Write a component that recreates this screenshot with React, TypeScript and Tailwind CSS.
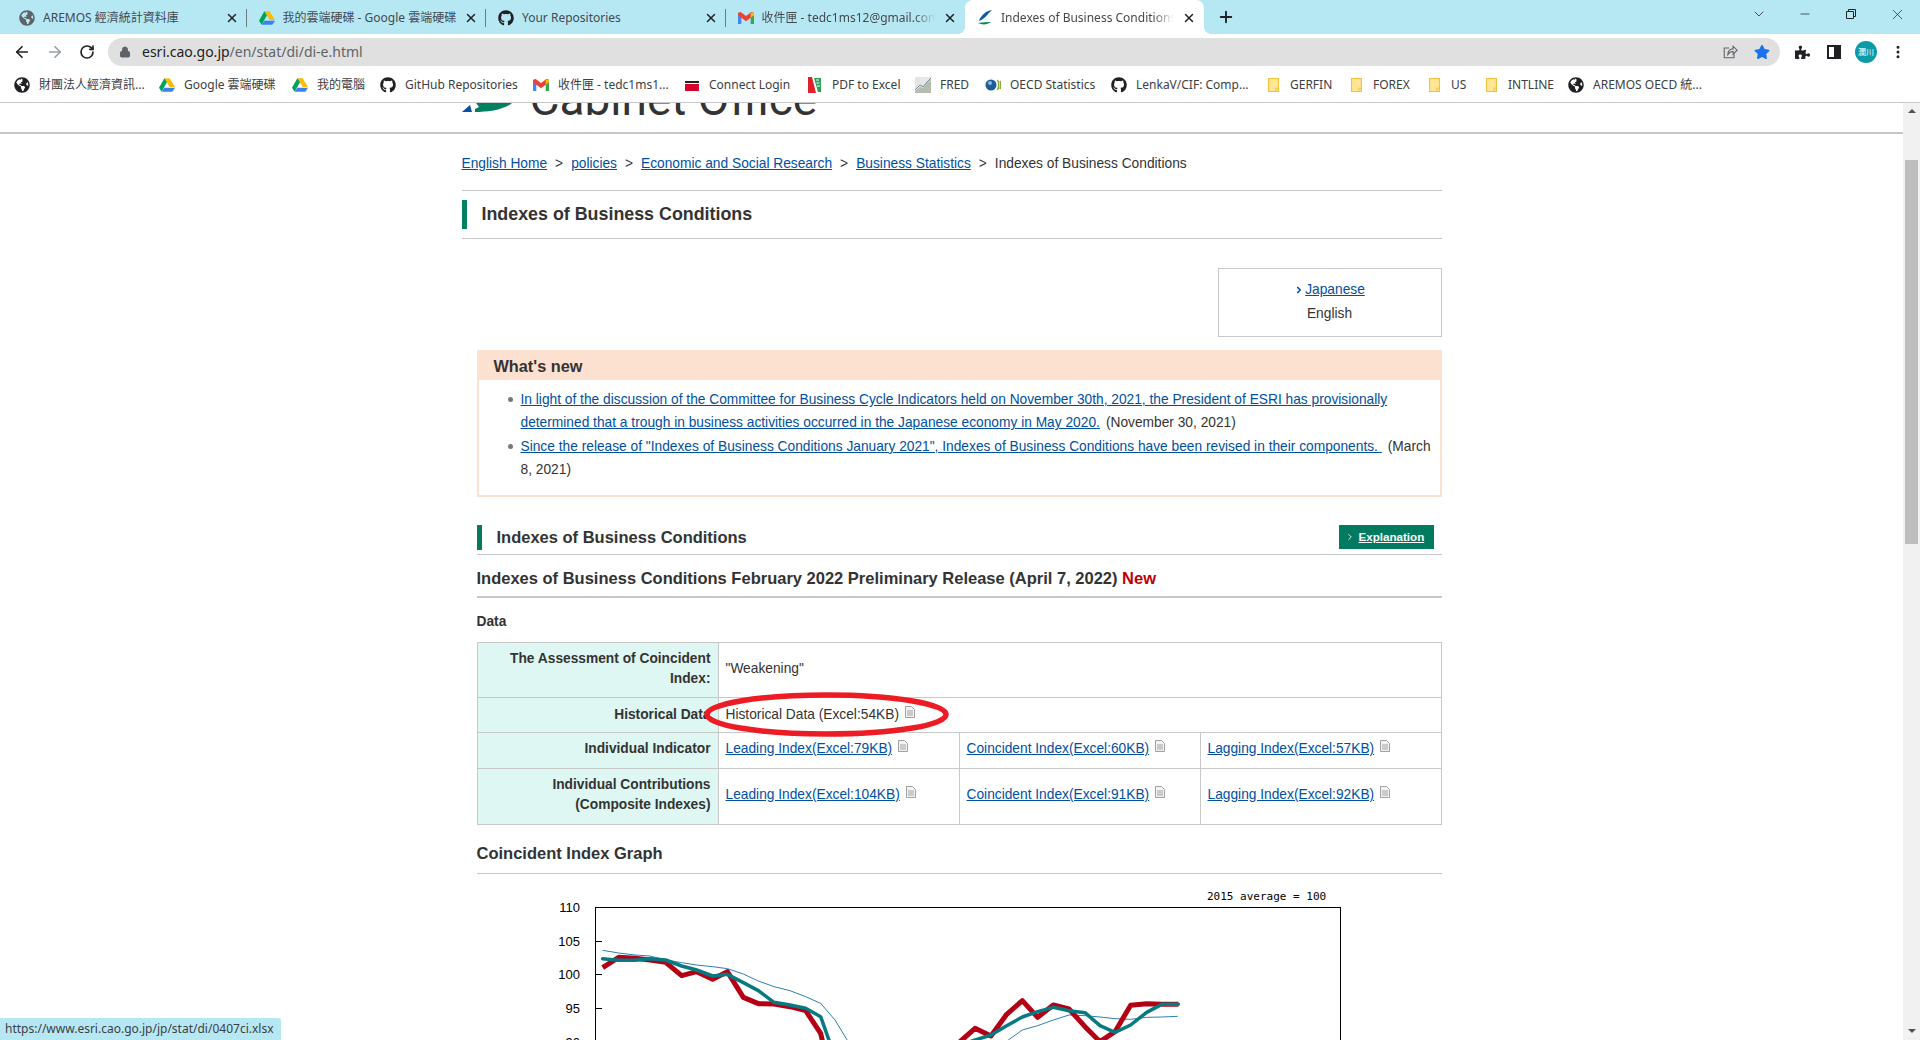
import React from 'react';
import { FaGithub, FaGlobeAmericas, FaStar, FaPuzzlePiece } from 'react-icons/fa';
import { ArrowLeft, ArrowRight, RotateCw, Lock, X, Plus, ChevronDown, Minus, EllipsisVertical, ChevronRight } from 'lucide-react';

const uiFont = "font-['Noto_Sans','Noto_Sans_CJK_TC',sans-serif]";

const DriveIcon = () => (
  <svg viewBox="0 0 24 22" className="w-4 h-4 shrink-0">
    <path d="M8 1h8l8 13h-8z" fill="#fbbc04" />
    <path d="M8 1 0 15l4 6 8-14z" fill="#00a35c" />
    <path d="M8 15h16l-4 6H4z" fill="#3a7ff0" />
  </svg>
);

const GmailIcon = () => (
  <svg viewBox="0 0 24 18" className="w-4 h-4 shrink-0">
    <path d="M0 3v15h5V7z" fill="#4285f4" />
    <path d="M24 3v15h-5V7z" fill="#34a853" />
    <path d="M0 1v4l12 9 12-9V1l-4-1-8 6-8-6z" fill="#ea4335" />
    <path d="M19 1.5 24 1v4l-5 3.500z" fill="#fbbc04" />
  </svg>
);

const EsriIcon = () => (
  <svg viewBox="0 0 16 16" className="w-4 h-4 shrink-0">
    <path d="M15 0C9 1 4 5 2 11c3-1 7-4 9-7z" fill="#0d5aa7" />
    <path d="M1 13c4 2 9 2 13-1-4 0-9 0-13 1z" fill="#0a8a5f" />
  </svg>
);

const ConnectIcon = () => (
  <svg viewBox="0 0 16 16" className="w-4 h-4 shrink-0">
    <rect x="1" y="4" width="14" height="2" fill="#222" />
    <rect x="1" y="7" width="14" height="7" fill="#d6002a" />
  </svg>
);

const PdfIcon = () => (
  <svg viewBox="0 0 16 16" className="w-4 h-4 shrink-0">
    <rect x="1" y="0" width="14" height="16" fill="#e0202a" />
    <path d="M5 0h10v16H9z" fill="#fff" />
    <path d="M7 1h7v14h-3z" fill="#2aa05a" />
    <path d="M9 3h3M9.500 6h3M10 9h3" stroke="#fff" strokeWidth="1" />
  </svg>
);

const FredIcon = () => (
  <svg viewBox="0 0 16 16" className="w-4 h-4 shrink-0">
    <rect width="16" height="16" fill="#e6e6e6" />
    <path d="M0 14 5 10l3 1 4-5 4-4v14H0z" fill="#b5bdb0" />
    <path d="M0 13 5 8l3 2 4-5 4-4" stroke="#6f8f9f" strokeWidth="1" fill="none" />
  </svg>
);

const OecdIcon = () => (
  <svg viewBox="0 0 16 16" className="w-4 h-4 shrink-0">
    <circle cx="6" cy="8" r="5.500" fill="#1d5c9c" />
    <circle cx="5" cy="6" r="2" fill="#8db8dc" />
    <path d="M12.500 3c1.500 3 1.500 7 0 10M15 4c1 2.500 1 5.500 0 8" stroke="#8aa83c" strokeWidth="1.500" fill="none" />
  </svg>
);

const FolderIcon = () => (
  <svg viewBox="0 0 14 18" className="w-[11px] h-4 shrink-0 mx-[2.500px]">
    <path d="M.7.700h12.600v16.600H.7z" fill="#ffe594" stroke="#f0c33c" strokeWidth="1.400" />
    <path d="M10 17v-4h3" fill="none" stroke="#f0c33c" strokeWidth="1.200" />
  </svg>
);

const ShareIcon = () => (
  <svg viewBox="0 0 18 18" className="ml-auto w-[16px] h-[16px]" fill="none" stroke="#5f6368" strokeWidth="1.200">
    <path d="M8 4.500H2.500v11h11V11" />
    <path d="M6.500 12c0-4 2.500-6.500 6-6.500V2.500L17 7l-4.500 4.500V8.500c-2.500 0-4.500 1-6 3.500z" />
  </svg>
);

const bookmarks = [
  { icon: <FaGlobeAmericas className="w-4 h-4 shrink-0 text-[#202124]" />, label: '財團法人經濟資訊...', w: 'w-[104px]' },
  { icon: <DriveIcon />, label: 'Google 雲端硬碟', w: 'w-[92px]' },
  { icon: <DriveIcon />, label: '我的電腦', w: 'w-[47px]' },
  { icon: <FaGithub className="w-4 h-4 shrink-0 text-[#202124]" />, label: 'GitHub Repositories', w: 'w-[112px]' },
  { icon: <GmailIcon />, label: '收件匣 - tedc1ms1...', w: 'w-[110px]' },
  { icon: <ConnectIcon />, label: 'Connect Login', w: 'w-[82px]' },
  { icon: <PdfIcon />, label: 'PDF to Excel', w: 'w-[67px]' },
  { icon: <FredIcon />, label: 'FRED', w: 'w-[29px]' },
  { icon: <OecdIcon />, label: 'OECD Statistics', w: 'w-[85px]' },
  { icon: <FaGithub className="w-4 h-4 shrink-0 text-[#202124]" />, label: 'LenkaV/CIF: Comp...', w: 'w-[113px]' },
  { icon: <FolderIcon />, label: 'GERFIN', w: 'w-[42px]' },
  { icon: <FolderIcon />, label: 'FOREX', w: 'w-[37px]' },
  { icon: <FolderIcon />, label: 'US', w: 'w-[16px]' },
  { icon: <FolderIcon />, label: 'INTLINE', w: 'w-[44px]' },
  { icon: <FaGlobeAmericas className="w-4 h-4 shrink-0 text-[#202124]" />, label: 'AREMOS OECD 統...', w: 'w-[111px]' },
];

const tabs = [
  { icon: <FaGlobeAmericas className="w-4 h-4 shrink-0 text-[#5f6368]" />, label: 'AREMOS 經濟統計資料庫', fade: '' },
  { icon: <DriveIcon />, label: '我的雲端硬碟 - Google 雲端硬碟', fade: '' },
  { icon: <FaGithub className="w-4 h-4 shrink-0 text-[#202124]" />, label: 'Your Repositories', fade: '' },
  { icon: <GmailIcon />, label: '收件匣 - tedc1ms12@gmail.com', fade: '[mask-image:linear-gradient(to_right,black_88%,transparent)]' },
];

const FileIcon = () => (
  <svg viewBox="0 0 10 12" className="inline-block w-[10px] h-[12px] ml-[6px] align-[1px]">
    <path d="M.5.500h6l3 3v8h-9z" fill="#f4f4f4" stroke="#a0a0a0" />
    <path d="M2 5h6M2 7h6M2 9h6" stroke="#a0a0a0" strokeWidth="1" />
  </svg>
);

const TableLink = ({ children }: { children: React.ReactNode }) => (
  <>
    <a className="text-[#00509f] underline">{children}</a>
    <FileIcon />
  </>
);

const toPage = (points: number[][], ox: number) =>
  points.map(([x, y]) => `${ox + x / 3},${880 + y / 3}`).join(' ');

const redLine =
  toPage([[248, 263], [296, 232], [345, 235], [390, 240], [437, 247], [485, 287], [530, 275], [578, 298], [622, 275], [670, 352], [715, 371], [762, 372], [810, 380], [857, 392], [902, 460], [925, 560]], 520) +
  ' ' +
  toPage([[85, 560], [120, 485], [165, 445], [213, 468], [260, 403], [307, 362], [353, 412], [400, 375], [447, 387], [495, 440], [540, 485], [585, 455], [632, 376], [680, 371], [725, 373], [775, 373]], 920);

const tealLine =
  toPage([[248, 236], [296, 241], [345, 241], [390, 236], [437, 240], [485, 258], [530, 270], [578, 288], [622, 283], [670, 308], [715, 332], [762, 367], [810, 375], [857, 385], [902, 410], [955, 560]], 520) +
  ' ' +
  toPage([[100, 560], [150, 485], [213, 465], [260, 437], [307, 411], [353, 395], [400, 382], [447, 392], [495, 398], [540, 437], [585, 457], [632, 435], [680, 397], [725, 373], [775, 373]], 920);

const thinLine =
  toPage([[248, 211], [296, 219], [345, 225], [390, 228], [437, 240], [485, 248], [530, 255], [578, 260], [622, 266], [670, 282], [715, 303], [762, 320], [810, 332], [857, 350], [902, 370], [945, 420], [1030, 560]], 520) +
  ' ' +
  toPage([[190, 540], [265, 480], [307, 450], [353, 437], [400, 420], [447, 405], [495, 407], [540, 411], [585, 416], [632, 418], [680, 412], [725, 411], [773, 409]], 920);

const CoincidentChart = () => (
  <svg viewBox="477 874 965 170" className="block w-[965px] h-[170px] ml-[15px]">
    <text x="1207" y="900" fontFamily="DejaVu Sans Mono, monospace" fontSize="11" fill="#000">2015 average = 100</text>
    <rect x="595.500" y="907.500" width="745" height="200" fill="none" stroke="#000" strokeWidth="1" />
    {[941, 974, 1008].map(y => (
      <path key={y} d={`M596 ${y}.5h6`} stroke="#000" strokeWidth="1" />
    ))}
    {[['110', 907], ['105', 941], ['100', 974], ['95', 1008], ['90', 1042]].map(([t, y]) => (
      <text key={t} x="580" y={Number(y) + 5} textAnchor="end" fontFamily="Liberation Sans, sans-serif" fontSize="13" fill="#000">{t}</text>
    ))}
    <polyline points={thinLine} fill="none" stroke="#2e7fb0" strokeWidth="1" />
    <polyline points={redLine} fill="none" stroke="#b40014" strokeWidth="5" strokeLinejoin="round" />
    <polyline points={tealLine} fill="none" stroke="#067a80" strokeWidth="3.500" strokeLinejoin="round" strokeLinecap="round" />
  </svg>
);

const App = () => {
  return (
    <div className="relative h-[1040px] w-[1920px] overflow-hidden bg-white flex flex-col">
      {/* Tab strip */}
      <div className={`h-[34px] shrink-0 bg-[#b6e8f4] flex pl-[7px] ${uiFont}`}>
        {tabs.map((tab, i) => (
          <div key={tab.label} className="relative w-[239.5px] flex items-center pl-[12px] pr-[8px] pt-[2px] text-[12px] text-[#45494d]">
            {tab.icon}
            <span className={`ml-[8px] flex-1 overflow-hidden whitespace-nowrap ${tab.fade}`}>{tab.label}</span>
            <X className="w-[14px] h-[14px] ml-[8px] shrink-0 text-[#202124]" strokeWidth={2.5} />
            {i < 3 && <div className="absolute right-0 top-[9px] h-[18px] w-px bg-[#6b7b80]" />}
          </div>
        ))}
        <div className="relative w-[239px] flex items-center pl-[12px] pr-[8px] pt-[2px] text-[12px] text-[#45494d] bg-white rounded-t-lg">
          <div className="absolute -left-2 bottom-0 w-2 h-2 bg-[radial-gradient(circle_at_0_0,transparent_8px,white_8px)]" />
          <div className="absolute -right-2 bottom-0 w-2 h-2 bg-[radial-gradient(circle_at_100%_0,transparent_8px,white_8px)]" />
          <EsriIcon />
          <span className="ml-[8px] flex-1 overflow-hidden whitespace-nowrap [mask-image:linear-gradient(to_right,black_88%,transparent)]">Indexes of Business Conditions</span>
          <X className="w-[14px] h-[14px] ml-[8px] shrink-0 text-[#202124]" strokeWidth={2.5} />
        </div>
        <div className="w-[44px] flex items-center justify-center">
          <Plus className="w-[18px] h-[18px] text-[#202124]" strokeWidth={2.5} />
        </div>
        <div className="ml-auto flex h-[28px] items-center">
          <div className="w-[46px] flex justify-center"><ChevronDown className="w-[16px] h-[16px] text-[#333]" strokeWidth={1.25} /></div>
          <div className="w-[46px] flex justify-center"><Minus className="w-[14px] h-[14px] text-[#222]" strokeWidth={1.25} /></div>
          <div className="w-[46px] flex justify-center">
            <svg viewBox="0 0 10 10" className="w-[10px] h-[10px]" fill="none" stroke="#222" strokeWidth="1">
              <path d="M.5 2.500h7v7h-7zM2.500 2.500v-2h7v7h-2" />
            </svg>
          </div>
          <div className="w-[46px] flex justify-center"><X className="w-[17px] h-[17px] text-[#222]" strokeWidth={1} /></div>
        </div>
      </div>

      {/* Toolbar */}
      <div className="h-[32px] shrink-0 flex items-end pl-[5px]">
        <div className="h-[28px] w-[33px] flex items-center justify-center"><ArrowLeft className="w-[18px] h-[18px] text-[#202124]" strokeWidth={2.25} /></div>
        <div className="h-[28px] w-[33px] flex items-center justify-center"><ArrowRight className="w-[18px] h-[18px] text-[#9aa0a6]" strokeWidth={2.25} /></div>
        <div className="h-[28px] w-[32px] flex items-center justify-center"><RotateCw className="w-[16px] h-[16px] text-[#202124]" strokeWidth={2.5} /></div>
        <div className={`ml-[5px] h-[28px] w-[1672px] rounded-full bg-[#e0e0e0] flex items-center pl-[11px] pr-[10px] ${uiFont}`}>
          <Lock className="w-[12px] h-[12px] text-[#5f6368] fill-[#5f6368]" strokeWidth={2} />
          <span className="ml-[11px] pb-[2px] text-[14px] text-[#202124]">esri.cao.go.jp<span className="text-[#5f6368]">/en/stat/di/di-e.html</span></span>
          <ShareIcon />
          <FaStar className="ml-[16px] w-[16px] h-[16px] text-[#1a73e8]" />
        </div>
        <div className="ml-[6px] flex h-[28px] items-center">
          <div className="w-[32px] flex justify-center"><FaPuzzlePiece className="w-[15px] h-[15px] text-[#202124]" /></div>
          <div className="w-[32px] flex justify-center">
            <div className="w-[14px] h-[14px] border-2 border-[#202124] flex justify-end"><div className="w-[5px] bg-[#202124]" /></div>
          </div>
          <div className="w-[32px] flex justify-center">
            <div className="w-[22px] h-[22px] rounded-full bg-[#0d9aa8] text-white text-[8px] flex items-center justify-center font-['Noto_Sans_CJK_TC',sans-serif]">瀾川</div>
          </div>
          <div className="w-[32px] flex justify-center"><EllipsisVertical className="w-[16px] h-[16px] text-[#202124]" strokeWidth={2.5} /></div>
        </div>
      </div>

      {/* Bookmarks bar */}
      <div className={`h-[37px] shrink-0 flex items-center gap-[16px] pl-[14px] pt-[1px] border-b border-[#c9c9c9] text-[12px] text-[#3c4043] ${uiFont}`}>
        {bookmarks.map(b => (
          <div key={b.label} className="flex items-center gap-[9px]">
            {b.icon}
            <span className={`${b.w} whitespace-nowrap`}>{b.label}</span>
          </div>
        ))}
      </div>

      <div className="flex-1 min-h-0 flex">
        {/* Page */}
        <div className="flex-1 min-w-0 overflow-hidden font-['Liberation_Sans',Arial,sans-serif] text-[13.75px] text-[#333]">
          <div className="h-[31px] border-b-2 border-[#c8c8c8] overflow-hidden">
            <div className="w-[980px] mx-auto relative h-[29px]">
              <svg viewBox="0 0 50 10" className="absolute left-0 top-0 w-[50px] h-[10px]">
                <path d="M0 9 8 2 10 9z" fill="#0d4ea2" />
                <path d="M13 9C25 9 42 7 50 0H14l3 4-4 2z" fill="#00805f" />
              </svg>
              <span className="absolute left-[68px] -top-[27px] font-['Roboto',sans-serif] text-[46px] leading-[46px] whitespace-nowrap text-[#333]">Cabinet Office</span>
            </div>
          </div>

          <div className="w-[980px] mx-auto flex flex-col">
            {/* Breadcrumb */}
            <div className="mt-[20px] h-[20px] leading-[20px] flex gap-[8px] whitespace-nowrap">
              <a className="text-[#00509f] underline">English Home</a><span>&gt;</span>
              <a className="text-[#00509f] underline">policies</a><span>&gt;</span>
              <a className="text-[#00509f] underline">Economic and Social Research</a><span>&gt;</span>
              <a className="text-[#00509f] underline">Business Statistics</a><span>&gt;</span>
              <span>Indexes of Business Conditions</span>
            </div>

            {/* Page title */}
            <div className="mt-[16px] border-y border-[#c8c8c8] py-[9px] flex items-center">
              <div className="w-[5px] h-[29px] bg-[#00805f]" />
              <h1 className="ml-[15px] text-[17.85px] font-bold">Indexes of Business Conditions</h1>
            </div>

            {/* Language switch */}
            <div className="mt-[29px] self-end w-[224px] h-[69px] border border-[#c8c8c8] pb-[1px] flex flex-col items-center justify-center leading-[24px]">
              <div className="flex items-center">
                <ChevronRight className="w-[10px] h-[10px] text-[#00509f]" strokeWidth={4} />
                <a className="ml-[1px] text-[#00509f] underline">Japanese</a>
              </div>
              <div>English</div>
            </div>

            {/* What's new */}
            <div className="mt-[13px] ml-[15px] h-[147px] border-2 border-t-0 border-[#fce0d0]">
              <div className="-mx-[2px] h-[30px] bg-[#fce0d0] pl-[17px] pt-[1px] leading-[30px] text-[16.3px] font-bold">What's new</div>
              <ul className="pt-[8px] pl-[42px] pr-[6px] leading-[23.4px]">
                <li className="relative before:absolute before:-left-[13px] before:top-[9px] before:w-[5px] before:h-[5px] before:rounded-full before:bg-[#777]">
                  <a className="text-[#00509f] underline">In light of the discussion of the Committee for Business Cycle Indicators held on November 30th, 2021, the President of ESRI has provisionally determined that a trough in business activities occurred in the Japanese economy in May 2020.</a>
                  <span className="ml-[6px]">(November 30, 2021)</span>
                </li>
                <li className="relative before:absolute before:-left-[13px] before:top-[9px] before:w-[5px] before:h-[5px] before:rounded-full before:bg-[#777]">
                  <a className="text-[#00509f] underline">Since the release of "Indexes of Business Conditions January 2021", Indexes of Business Conditions have been revised in their components.&nbsp;</a>
                  <span className="ml-[6px]">(March 8, 2021)</span>
                </li>
              </ul>
            </div>

            {/* Section heading */}
            <div className="mt-[28px] ml-[15px] pb-[4px] border-b border-[#c8c8c8] flex items-start">
              <div className="w-[5px] h-[25px] bg-[#007b5f]" />
              <h2 className="ml-[15px] text-[16.5px] leading-[25px] font-bold">Indexes of Business Conditions</h2>
              <div className="ml-auto mr-[8px] w-[95px] h-[24px] bg-[#007b5f] flex items-center pl-[6px] text-white">
                <ChevronRight className="w-[10px] h-[10px]" strokeWidth={2} />
                <a className="ml-[4px] text-[11.6px] font-bold underline">Explanation</a>
              </div>
            </div>

            <h3 className="ml-[15px] pt-[12px] pb-[7px] border-b-2 border-[#c8c8c8] text-[16.5px] leading-[22px] font-bold">
              Indexes of Business Conditions February 2022 Preliminary Release (April 7, 2022) <span className="text-[#c00000]">New</span>
            </h3>

            <div className="mt-[14px] ml-[15px] h-[20px] leading-[20px] font-bold">Data</div>

            {/* Data table */}
            <div className="relative mt-[10px] ml-[15px]">
              <table className="w-full table-fixed border-collapse leading-[20px]">
                <tbody>
                  <tr className="h-[55px]">
                    <th className="w-[241px] border border-[#c8c8c8] bg-[#dff7f3] px-[7px] pb-[3px] text-right font-bold">The Assessment of Coincident Index:</th>
                    <td colSpan={3} className="border border-[#c8c8c8] px-[7px] pb-[3px]">"Weakening"</td>
                  </tr>
                  <tr className="h-[35px]">
                    <th className="border border-[#c8c8c8] bg-[#dff7f3] px-[7px] pb-[1px] text-right font-bold">Historical Data</th>
                    <td colSpan={3} className="border border-[#c8c8c8] px-[7px] pb-[1px]">Historical Data (Excel:54KB)<FileIcon /></td>
                  </tr>
                  <tr className="h-[36px]">
                    <th className="border border-[#c8c8c8] bg-[#dff7f3] px-[7px] pb-[3px] text-right font-bold">Individual Indicator</th>
                    <td className="border border-[#c8c8c8] px-[7px] pb-[3px]"><TableLink>Leading Index(Excel:79KB)</TableLink></td>
                    <td className="border border-[#c8c8c8] px-[7px] pb-[3px]"><TableLink>Coincident Index(Excel:60KB)</TableLink></td>
                    <td className="border border-[#c8c8c8] px-[7px] pb-[3px]"><TableLink>Lagging Index(Excel:57KB)</TableLink></td>
                  </tr>
                  <tr className="h-[56px]">
                    <th className="border border-[#c8c8c8] bg-[#dff7f3] px-[7px] pb-[3px] text-right font-bold">Individual Contributions (Composite Indexes)</th>
                    <td className="border border-[#c8c8c8] px-[7px] pb-[3px]"><TableLink>Leading Index(Excel:104KB)</TableLink></td>
                    <td className="border border-[#c8c8c8] px-[7px] pb-[3px]"><TableLink>Coincident Index(Excel:91KB)</TableLink></td>
                    <td className="border border-[#c8c8c8] px-[7px] pb-[3px]"><TableLink>Lagging Index(Excel:92KB)</TableLink></td>
                  </tr>
                </tbody>
              </table>
              {/* red annotation drawn over the table */}
              <svg viewBox="0 0 245 45" className="absolute left-[227px] top-[50px] w-[245px] h-[45px]">
                <ellipse cx="122.500" cy="22.500" rx="119.500" ry="19.500" fill="none" stroke="#ed1c24" strokeWidth="5.500" />
              </svg>
            </div>

            <h3 className="mt-[17px] ml-[15px] pb-[9px] border-b border-[#c8c8c8] text-[16.5px] leading-[22px] font-bold">Coincident Index Graph</h3>
            <CoincidentChart />
          </div>
        </div>

        {/* Scrollbar */}
        <div className="w-[17px] shrink-0 bg-[#f1f1f1] flex flex-col items-center">
          <div className="mt-[6px] w-0 h-0 border-x-[4px] border-x-transparent border-b-[4px] border-b-[#505050]" />
          <div className="mt-[47px] w-[13px] h-[384px] bg-[#bdbdbd]" />
          <div className="mt-auto mb-[7px] w-0 h-0 border-x-[4px] border-x-transparent border-t-[4px] border-t-[#505050]" />
        </div>
      </div>

      {/* Link status bubble */}
      <div className={`absolute left-0 bottom-0 h-[22px] w-[281px] rounded-tr-[3px] bg-[#b6e8f4] pl-[5px] text-[12px] leading-[22px] text-[#3c4043] whitespace-nowrap ${uiFont}`}>
        https://www.esri.cao.go.jp/jp/stat/di/0407ci.xlsx
      </div>
    </div>
  );
};

export default App;
